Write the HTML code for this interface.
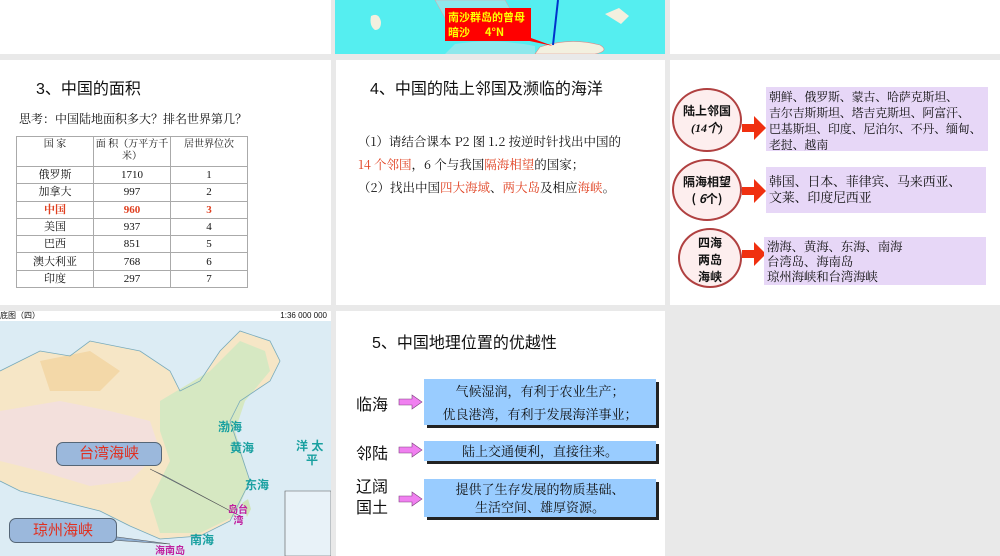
<!DOCTYPE html>
<html><head><meta charset="utf-8"><style>
*{margin:0;padding:0;box-sizing:border-box}
body{width:1000px;height:556px;background:#e9e9e9;position:relative;overflow:hidden;font-family:"Liberation Sans","Noto Sans CJK SC",sans-serif;color:#111}
.p{position:absolute;background:#fff}
.a{position:absolute;white-space:nowrap}
table{border-collapse:collapse;font-family:"Liberation Serif","Noto Serif CJK SC",serif;font-size:11px;table-layout:fixed}
td{border:1px solid #aaa;text-align:center;height:17.3px;padding:0;line-height:12px}
.h td{font-size:10px;vertical-align:top;padding-top:2px;height:30px;white-space:nowrap}
.r{color:#e04020}
.ell{position:absolute;border:2px solid #b04040;border-radius:50%;background:#fdeeee;text-align:center;font-weight:bold;font-size:12px;line-height:17px;font-family:"Noto Sans CJK SC",sans-serif}
.pb{position:absolute;background:#e7d7f7;font-size:12px;line-height:16px;padding:2px 3px;font-family:"Noto Serif CJK SC",serif;white-space:nowrap;letter-spacing:-0.2px}
.bb{position:absolute;background:#99ccff;box-shadow:3px 3px 0 #222;text-align:center;font-size:13px;font-family:"Noto Serif CJK SC",serif}
.t{font-size:16px;font-weight:normal}
</style></head><body>
<div class="p" style="left:0;top:0;width:331px;height:54px"></div>
<div class="p" style="left:335px;top:0;width:330px;height:54px;background:#55eef0">
<svg width="330" height="54" style="position:absolute;left:0;top:0">
<path d="M36 16 q8 -4 10 6 q0 8 -6 8 q-6 -4 -4 -14z" fill="#f3f0df"/>
<path d="M100 0 L170 0 L180 18 L160 28 L130 30 L110 18z" fill="#8ee8ec" stroke="#e99" stroke-width="0.5"/>
<path d="M120 44 q40 -6 80 2 L200 54 L110 54z" fill="#8ee8ec"/>
<path d="M205 47 q30 -10 60 -2 q10 6 -5 9 L200 54z" fill="#f3f0df" stroke="#d88" stroke-width="0.6"/>
<path d="M270 14 l14 -6 l10 8 l-8 8z" fill="#f3f0df"/>
<line x1="223" y1="0" x2="218" y2="45" stroke="#0033cc" stroke-width="2"/>
<polygon points="190,32 196,38 218,46 190,40" fill="#f00"/>
</svg>
<div class="a" style="left:110px;top:8px;width:86px;height:33px;background:#f00;color:#ff0;font-size:11px;line-height:15px;padding:2px 3px;font-weight:bold;font-family:'Noto Sans CJK SC',sans-serif">南沙群岛的曾母<br>暗沙&nbsp;&nbsp;&nbsp;&nbsp;&nbsp;&nbsp;4°N</div>
</div>
<div class="p" style="left:670px;top:0;width:330px;height:54px"></div>

<div class="p" style="left:0;top:60px;width:331px;height:245px">
<div class="a t" style="left:36px;top:15px">3、中国的面积</div>
<div class="a" style="left:19px;top:50px;font-size:12px;font-family:'Noto Serif CJK SC',serif">思考：中国陆地面积多大？排名世界第几？</div>
<table style="position:absolute;left:16px;top:76px;width:232px">
<colgroup><col style="width:77px"><col style="width:77px"><col></colgroup>
<tr class="h"><td>国 家</td><td>面 积（万平方千<br>米）</td><td>居世界位次</td></tr>
<tr><td>俄罗斯</td><td>1710</td><td>1</td></tr>
<tr><td>加拿大</td><td>997</td><td>2</td></tr>
<tr class="r" style="font-weight:bold"><td>中国</td><td>960</td><td>3</td></tr>
<tr><td>美国</td><td>937</td><td>4</td></tr>
<tr><td>巴西</td><td>851</td><td>5</td></tr>
<tr><td>澳大利亚</td><td>768</td><td>6</td></tr>
<tr><td>印度</td><td>297</td><td>7</td></tr>
</table>
</div>

<div class="p" style="left:336px;top:60px;width:329px;height:245px">
<div class="a t" style="left:34px;top:15px">4、中国的陆上邻国及濒临的海洋</div>
<div class="a" style="left:22px;top:70px;font-size:12.5px;line-height:23px;font-family:'Noto Serif CJK SC',serif">（1）请结合课本 P2 图 1.2 按逆时针找出中国的<br><span class="r">14 个邻国</span>，6 个与我国<span class="r">隔海相望</span>的国家；<br>（2）找出中国<span class="r">四大海域</span>、<span class="r">两大岛</span>及相应<span class="r">海峡</span>。</div>
</div>

<div class="p" style="left:670px;top:60px;width:330px;height:245px">
<div class="ell" style="left:2px;top:28px;width:70px;height:64px;padding-top:12px">陆上邻国<br><i style="font-family:'Liberation Serif',serif">(14个)</i></div>
<div class="ell" style="left:2px;top:99px;width:70px;height:62px;padding-top:12px">隔海相望<br>( <i>6</i>个)</div>
<div class="ell" style="left:8px;top:168px;width:64px;height:60px;padding-top:4px;line-height:17px">四海<br>两岛<br>海峡</div>
<svg style="position:absolute;left:70px;top:0" width="30" height="245">
<polygon points="2,64 14,64 14,56 26,68 14,80 14,72 2,72" fill="#f03010"/>
<polygon points="2,127 14,127 14,119 26,131 14,143 14,135 2,135" fill="#f03010"/>
<polygon points="2,190 14,190 14,182 26,194 14,206 14,198 2,198" fill="#f03010"/>
</svg>
<div class="pb" style="left:96px;top:27px;width:222px;height:64px">朝鲜、俄罗斯、蒙古、哈萨克斯坦、<br>吉尔吉斯斯坦、塔吉克斯坦、阿富汗、<br>巴基斯坦、印度、尼泊尔、不丹、缅甸、<br>老挝、越南</div>
<div class="pb" style="left:96px;top:107px;width:220px;height:46px;padding-top:6px;font-size:13px">韩国、日本、菲律宾、马来西亚、<br>文莱、印度尼西亚</div>
<div class="pb" style="left:94px;top:177px;width:222px;height:48px;line-height:15px;font-size:12.5px">渤海、黄海、东海、南海<br>台湾岛、海南岛<br>琼州海峡和台湾海峡</div>
</div>

<div class="p" style="left:0;top:311px;width:331px;height:245px;background:#dcecf4;overflow:hidden">
<div class="a" style="left:0;top:0;width:331px;height:10px;background:#fff;font-size:8px;line-height:10px">底图（四）<span style="position:absolute;right:4px">1:36 000 000</span></div>
<svg width="331" height="245" style="position:absolute;left:0;top:0">
<path d="M0 60 L40 40 L70 45 L90 30 L140 40 L170 60 L180 80 L200 70 L220 40 L240 20 L270 30 L280 50 L270 70 L240 90 L230 110 L240 140 L250 170 L240 190 L230 210 L200 225 L160 228 L130 215 L100 200 L60 190 L20 180 L0 170z" fill="#f6e6c6"/>
<path d="M0 100 L60 90 L110 100 L150 110 L160 140 L130 170 L90 175 L40 160 L0 150z" fill="#f3e0dc"/>
<path d="M40 50 L90 40 L120 60 L100 80 L50 80z" fill="#f3d8a8"/>
<path d="M160 90 L210 60 L240 30 L265 40 L270 60 L245 90 L235 120 L250 170 L235 205 L200 222 L160 222 L150 190 L170 150 L160 120z" fill="#d6e8c2"/>
<path d="M0 60 L40 40 L70 45 L90 30 L140 40 L170 60 L180 80 L200 70 L220 40 L240 20 L270 30 L280 50 L270 70 L240 90 L230 110 L240 140 L250 170 L240 190 L230 210 L200 225 L160 228 L130 215 L100 200 L60 190 L20 180 L0 170" fill="none" stroke="#7ab" stroke-width="0.8"/>
<path d="M242 192 l6 -4 l3 10 l-4 8z" fill="#cfe4b8"/>
<path d="M285 180 L331 180 L331 245 L285 245z" fill="#e8f2f8" stroke="#555" stroke-width="0.6"/>
<polygon points="150,158 240,205 165,165" fill="#8eaed0" stroke="#555" stroke-width="0.5"/>
<polygon points="110,225 170,233 110,229" fill="#8eaed0" stroke="#555" stroke-width="0.5"/>
</svg>
<div class="a" style="left:56px;top:131px;width:106px;height:24px;background:#9bb8dc;border:1px solid #567;border-radius:7px;color:#e03020;font-size:15px;text-align:center;line-height:22px">台湾海峡</div>
<div class="a" style="left:9px;top:207px;width:108px;height:25px;background:#9bb8dc;border:1px solid #567;border-radius:7px;color:#e03020;font-size:15px;text-align:center;line-height:23px">琼州海峡</div>
<div class="a" style="left:218px;top:107px;color:#19a0a0;font-weight:bold;font-size:12px">渤海</div>
<div class="a" style="left:230px;top:128px;color:#19a0a0;font-weight:bold;font-size:12px">黄海</div>
<div class="a" style="left:245px;top:165px;color:#19a0a0;font-weight:bold;font-size:12px">东海</div>
<div class="a" style="left:190px;top:220px;color:#19a0a0;font-weight:bold;font-size:12px">南海</div>
<div class="a" style="left:296px;top:128px;color:#19a0a0;font-weight:bold;font-size:12px;line-height:14px">洋 太<br>&nbsp;&nbsp;&nbsp;平</div>
<div class="a" style="left:228px;top:194px;color:#c020a0;font-weight:bold;font-size:10px;line-height:11px">岛台<br>&nbsp;&nbsp;湾</div>
<div class="a" style="left:155px;top:231px;color:#c020a0;font-weight:bold;font-size:10px">海南岛</div>
</div>

<div class="p" style="left:336px;top:311px;width:329px;height:245px">
<div class="a t" style="left:36px;top:18px">5、中国地理位置的优越性</div>
<div class="a" style="left:20px;top:80px;font-size:16px">临海</div>
<div class="a" style="left:20px;top:129px;font-size:16px">邻陆</div>
<div class="a" style="left:20px;top:166px;font-size:16px;line-height:21px">辽阔<br>国土</div>
<svg style="position:absolute;left:60px;top:0" width="30" height="245">
<polygon points="3,88 16,88 16,84 26,91 16,98 16,94 3,94" fill="#f080f0" stroke="#804080" stroke-width="0.6"/>
<polygon points="3,136 16,136 16,132 26,139 16,146 16,142 3,142" fill="#f080f0" stroke="#804080" stroke-width="0.6"/>
<polygon points="3,185 16,185 16,181 26,188 16,195 16,191 3,191" fill="#f080f0" stroke="#804080" stroke-width="0.6"/>
</svg>
<div class="bb" style="left:88px;top:68px;width:232px;height:46px;line-height:23px">气候湿润，有利于农业生产；<br>优良港湾，有利于发展海洋事业；</div>
<div class="bb" style="left:88px;top:130px;width:232px;height:20px;line-height:20px">陆上交通便利，直接往来。</div>
<div class="bb" style="left:88px;top:168px;width:232px;height:38px;line-height:18px;padding-top:1px">提供了生存发展的物质基础、<br>生活空间、雄厚资源。</div>
</div>
</body></html>
